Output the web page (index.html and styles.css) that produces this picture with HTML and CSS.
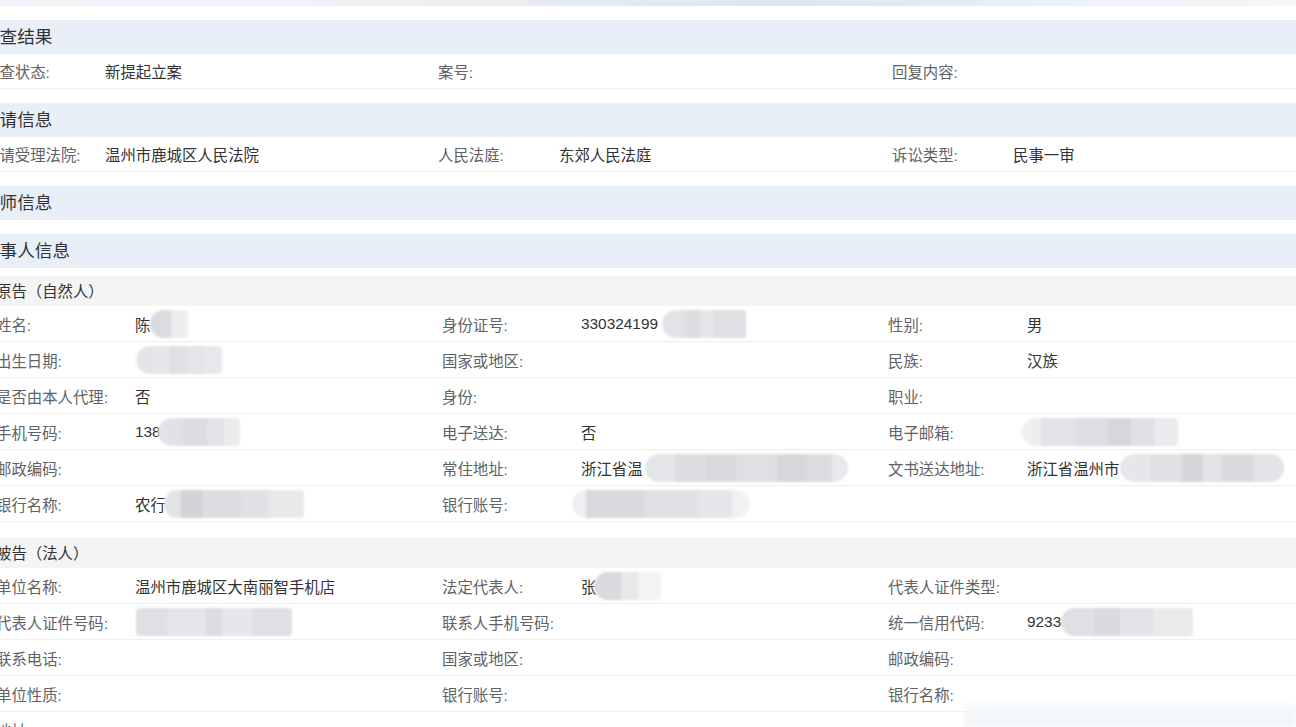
FILE: index.html
```html
<!DOCTYPE html>
<html lang="zh-CN">
<head>
<meta charset="utf-8">
<title>案件详情</title>
<link rel="stylesheet" href="styles.css">
</head>
<body>
<div class="topbar"></div>
<div class="page">
  <section class="sec">
    <div class="sec-head">审查结果</div>
    <div class="grid3">
      <div class="cell"><span class="lab">审查状态:</span><span class="val">新提起立案</span></div>
      <div class="cell"><span class="lab">案号:</span><span class="val"></span></div>
      <div class="cell"><span class="lab">回复内容:</span><span class="val"></span></div>
    </div>
  </section>
  <section class="sec">
    <div class="sec-head">申请信息</div>
    <div class="grid3">
      <div class="cell"><span class="lab">申请受理法院:</span><span class="val">温州市鹿城区人民法院</span></div>
      <div class="cell"><span class="lab">人民法庭:</span><span class="val">东郊人民法庭</span></div>
      <div class="cell"><span class="lab">诉讼类型:</span><span class="val">民事一审</span></div>
    </div>
  </section>
  <section class="sec">
    <div class="sec-head">律师信息</div>
  </section>
  <section class="sec">
    <div class="sec-head">当事人信息</div>
    <div class="party">
      <div class="party-head">原告（自然人）</div>
      <div class="pgrid">
        <div class="pcell"><span class="plab">姓名:</span><span class="pval">陈<span class="mask m-name"></span></span></div>
        <div class="pcell"><span class="plab">身份证号:</span><span class="pval">330324199<span class="mask m-id"></span></span></div>
        <div class="pcell"><span class="plab">性别:</span><span class="pval">男</span></div>

        <div class="pcell"><span class="plab">出生日期:</span><span class="pval"><span class="mask m-birth"></span></span></div>
        <div class="pcell"><span class="plab">国家或地区:</span><span class="pval"></span></div>
        <div class="pcell"><span class="plab">民族:</span><span class="pval">汉族</span></div>

        <div class="pcell"><span class="plab">是否由本人代理:</span><span class="pval">否</span></div>
        <div class="pcell"><span class="plab">身份:</span><span class="pval"></span></div>
        <div class="pcell"><span class="plab">职业:</span><span class="pval"></span></div>

        <div class="pcell"><span class="plab">手机号码:</span><span class="pval">138<span class="mask m-phone"></span></span></div>
        <div class="pcell"><span class="plab">电子送达:</span><span class="pval">否</span></div>
        <div class="pcell"><span class="plab">电子邮箱:</span><span class="pval"><span class="mask m-mail"></span></span></div>

        <div class="pcell"><span class="plab">邮政编码:</span><span class="pval"></span></div>
        <div class="pcell"><span class="plab">常住地址:</span><span class="pval">浙江省温<span class="mask m-addr"></span></span></div>
        <div class="pcell"><span class="plab">文书送达地址:</span><span class="pval">浙江省温州市<span class="mask m-addr2"></span></span></div>

        <div class="pcell"><span class="plab">银行名称:</span><span class="pval">农行<span class="mask m-bank"></span></span></div>
        <div class="pcell"><span class="plab">银行账号:</span><span class="pval"><span class="mask m-acct"></span></span></div>
        <div class="pcell empty"></div>
      </div>
    </div>
    <div class="party">
      <div class="party-head">被告（法人）</div>
      <div class="pgrid">
        <div class="pcell"><span class="plab">单位名称:</span><span class="pval">温州市鹿城区大南丽智手机店</span></div>
        <div class="pcell"><span class="plab">法定代表人:</span><span class="pval">张<span class="mask m-rep"></span></span></div>
        <div class="pcell"><span class="plab">代表人证件类型:</span><span class="pval"></span></div>

        <div class="pcell"><span class="plab">代表人证件号码:</span><span class="pval"><span class="mask m-repid"></span></span></div>
        <div class="pcell"><span class="plab">联系人手机号码:</span><span class="pval"></span></div>
        <div class="pcell"><span class="plab">统一信用代码:</span><span class="pval">9233<span class="mask m-credit"></span></span></div>

        <div class="pcell"><span class="plab">联系电话:</span><span class="pval"></span></div>
        <div class="pcell"><span class="plab">国家或地区:</span><span class="pval"></span></div>
        <div class="pcell"><span class="plab">邮政编码:</span><span class="pval"></span></div>

        <div class="pcell"><span class="plab">单位性质:</span><span class="pval"></span></div>
        <div class="pcell"><span class="plab">银行账号:</span><span class="pval"></span></div>
        <div class="pcell"><span class="plab">银行名称:</span><span class="pval"></span></div>

        <div class="pcell"><span class="plab">地址:</span><span class="pval"></span></div>
      </div>
    </div>
  </section>
</div>
<div class="fade-overlay"></div>
</body>
</html>
```

FILE: styles.css
```css
html, body {
  margin: 0;
  padding: 0;
  background: #ffffff;
  overflow: hidden;
}

body {
  font-family: "Liberation Sans", "Noto Sans CJK SC", sans-serif;
  color: #333333;
  position: relative;
  height: 727px;
}

.topbar {
  height: 6px;
  background: linear-gradient(90deg, #f1f6fb 0%, #edf3f9 25%, #f3ede9 34%, #f0eeee 36%, #e3ebf5 45%, #dce6f2 60%, #e2eaf4 72%, #eef4fa 85%, #f3f7fb 100%);
}

.page {
  margin-left: -16px;
  padding-top: 14px;
}

.sec {
  margin-bottom: 14px;
}

.sec-head {
  height: 34px;
  line-height: 34px;
  background: #e8eff7;
  font-size: 17.6px;
  color: #333333;
  white-space: nowrap;
  text-indent: -2px;
}

.grid3 {
  display: grid;
  grid-template-columns: 454px 454px 454px;
  border-bottom: 1px solid #e8eef5;
}

.cell {
  display: flex;
  height: 34px;
  align-items: center;
  font-size: 15.4px;
  white-space: nowrap;
}

.lab {
  width: 121px;
  flex: none;
  color: #606266;
}

.val {
  color: #333333;
}

.party {
  margin-left: 12px;
  margin-top: 8px;
}

.party + .party {
  margin-top: 16px;
}

.party-head {
  margin-left: -12px;
  padding-left: 12px;
  height: 30px;
  line-height: 31px;
  background: #f4f4f4;
  font-size: 15.4px;
  color: #333333;
  white-space: nowrap;
}

.pgrid {
  display: grid;
  grid-template-columns: 446px 446px 446px;
}

.pcell {
  display: flex;
  align-items: center;
  height: 35px;
  border-bottom: 1px solid #e9eff5;
  font-size: 15.4px;
  white-space: nowrap;
}

.plab {
  width: 139px;
  flex: none;
  color: #606266;
}

.pval {
  color: #333333;
  display: flex;
  align-items: center;
}

.mask {
  display: inline-block;
  height: 28px;
  border-radius: 14px 4px 4px 14px;
  filter: blur(1.2px);
  background-color: #e3e4e7;
}

.m-name {
  width: 38px;
  margin-left: 0;
  background: linear-gradient(90deg, #d9dadd 0%, #dcdde0 55%, #e9eaec 55%, #eef0f2 100%);
}

.m-id {
  width: 84px;
  margin-left: 4px;
  background: linear-gradient(90deg, #e2e3e6 0 30%, #dcdde0 30% 45%, #e4e5e8 45% 62%, #dfe0e3 62% 100%);
  border-radius: 14px 2px 2px 14px;
}

.m-birth {
  width: 86px;
  height: 28px;
  margin-left: 1px;
  background: linear-gradient(90deg, #e3e4e7 0 20%, #e6e7ea 20% 40%, #dfe0e3 40% 60%, #e4e5e8 60% 80%, #e7e8eb 80% 100%);
}

.m-phone {
  width: 82px;
  margin-left: -3px;
  background: linear-gradient(90deg, #e1e2e5 0 30%, #dcdde0 30% 60%, #e2e3e6 60% 80%, #eaebed 80% 100%);
}

.m-mail {
  width: 156px;
  margin-left: -5px;
  background: linear-gradient(90deg, #eceef0 0 12%, #e2e3e6 12% 35%, #dedfe2 35% 55%, #d6d7da 55% 70%, #e0e1e4 70% 85%, #eaebee 85% 100%);
}

.m-addr {
  width: 203px;
  margin-left: 2px;
  border-radius: 14px;
  background: linear-gradient(90deg, #e4e6e9 0 15%, #dcdde0 15% 30%, #d7d9dc 30% 45%, #dfe0e3 45% 65%, #d6d7da 65% 80%, #dbdcdf 80% 92%, #e7e8eb 92% 100%);
}

.m-addr2 {
  width: 164px;
  margin-left: 1px;
  border-radius: 14px;
  background: linear-gradient(90deg, #e6e7ea 0 18%, #e0e1e4 18% 38%, #d4d5d8 38% 50%, #e2e3e6 50% 62%, #d8d9dc 62% 82%, #e3e4e7 82% 100%);
}

.m-bank {
  width: 140px;
  margin-left: -2px;
  background: linear-gradient(90deg, #e3e4e7 0 12%, #d1d3d6 12% 28%, #dcdde0 28% 55%, #e1e2e5 55% 75%, #e8e9eb 75% 100%);
}

.m-acct {
  width: 178px;
  margin-left: -9px;
  border-radius: 14px;
  background: linear-gradient(90deg, #eeeff1 0 8%, #d8d9dc 8% 40%, #dfe0e3 40% 70%, #e5e6e9 70% 90%, #f0f1f3 90% 100%);
}

.m-rep {
  width: 67px;
  margin-left: -2px;
  background: linear-gradient(90deg, #d9dadd 0 40%, #e7e8ea 40% 65%, #f2f3f5 65% 100%);
}

.m-repid {
  width: 156px;
  margin-left: 1px;
  border-radius: 4px;
  background: linear-gradient(90deg, #dfe0e3 0 20%, #e4e5e8 20% 45%, #dbdcdf 45% 55%, #e6e7ea 55% 75%, #dfe0e3 75% 100%);
}

.m-credit {
  width: 132px;
  margin-left: 0;
  background: linear-gradient(90deg, #dfe0e3 0 25%, #d9dadd 25% 45%, #e2e3e6 45% 70%, #e9eaec 70% 100%);
}

.fade-overlay {
  position: absolute;
  left: 965px;
  top: 700px;
  width: 331px;
  height: 27px;
  background: linear-gradient(180deg, rgba(245, 248, 251, 0) 0%, rgba(243, 246, 250, 0.85) 40%, rgba(240, 244, 248, 0.95) 100%);
  filter: blur(2px);
  pointer-events: none;
}
```
